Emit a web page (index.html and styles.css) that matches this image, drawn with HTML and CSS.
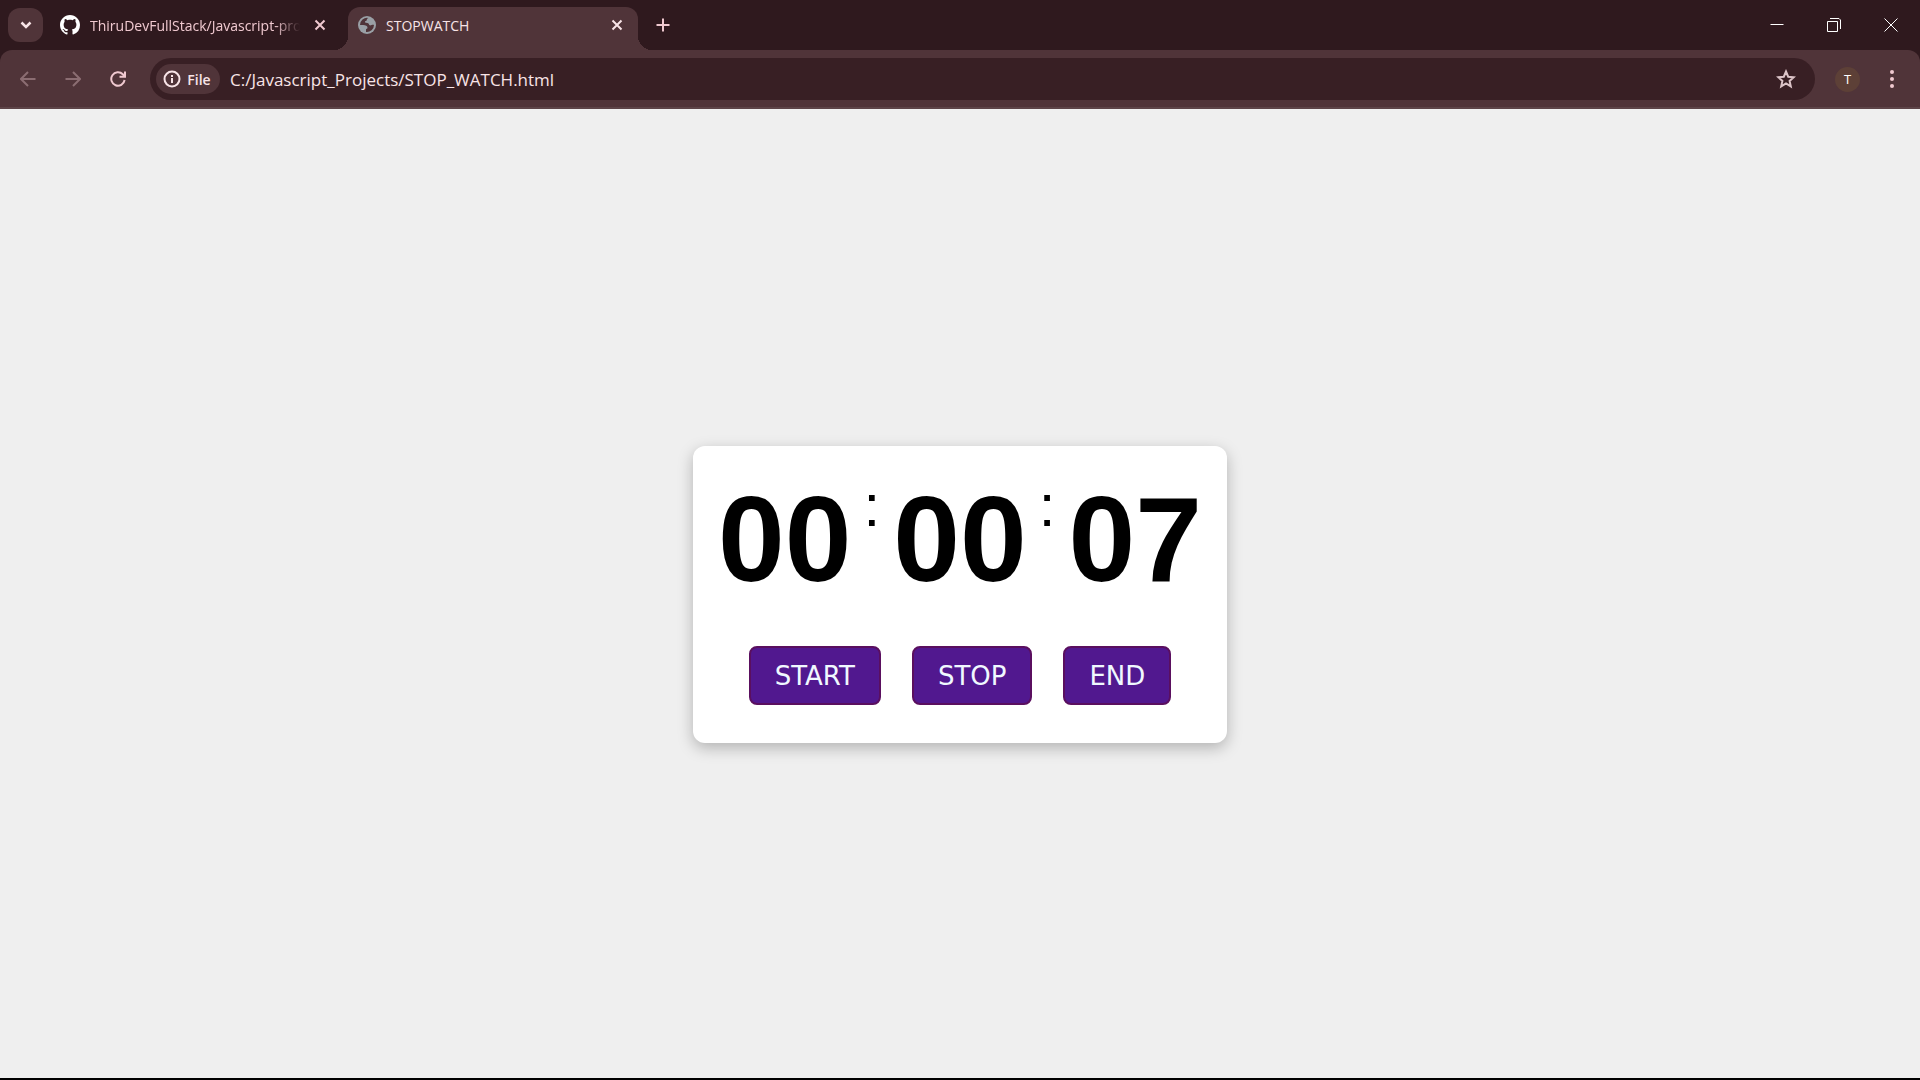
FILE: index.html
```html
<!DOCTYPE html>
<html lang="en">
<head>
<meta charset="utf-8">
<title>STOPWATCH</title>
<link rel="stylesheet" href="styles.css">
</head>
<body>
<header class="browser">
  <div class="tabstrip">
    <button class="tab-search" aria-label="Search tabs">
      <svg width="20" height="20" viewBox="0 0 20 20"><path d="M5.500 7.500 10 12l4.500-4.500" class="stroke thick"/></svg>
    </button>
    <div class="tab">
      <svg class="github" width="20" height="20" viewBox="0 0 16 16"><path d="M8 0C3.580 0 0 3.580 0 8c0 3.540 2.290 6.530 5.470 7.590.4.070.550-.170.550-.380 0-.190-.010-.820-.010-1.490-2.010.370-2.530-.490-2.690-.940-.090-.230-.480-.940-.820-1.130-.280-.150-.680-.520-.010-.530.630-.010 1.080.580 1.230.820.720 1.210 1.870.870 2.330.660.070-.520.280-.870.510-1.070-1.780-.2-3.640-.890-3.640-3.950 0-.870.310-1.590.820-2.150-.080-.2-.360-1.020.080-2.120 0 0 .670-.210 2.200.820.640-.180 1.320-.270 2-.270s1.360.090 2 .270c1.530-1.040 2.200-.820 2.200-.820.440 1.100.160 1.920.080 2.120.510.560.820 1.270.820 2.150 0 3.070-1.870 3.750-3.650 3.950.290.250.540.730.540 1.480 0 1.070-.010 1.930-.010 2.200 0 .210.150.460.550.380A8.010 8.010 0 0 0 16 8c0-4.420-3.580-8-8-8z"/></svg>
      <span class="tab-title fade">ThiruDevFullStack/Javascript-pro</span>
      <button class="tab-close" aria-label="Close tab"><svg width="12" height="12" viewBox="0 0 12 12"><path d="m1.500 1.500 9 9m0-9-9 9" class="stroke"/></svg></button>
    </div>
    <div class="tab active">
      <svg class="globe" width="18" height="18" viewBox="0 0 18 18"><circle cx="9" cy="9" r="9"/><path class="land" d="M10.500 1.900C9.600 2.300 8.700 3 8.700 4.200c0 1-1.800.6-1.800 1.700 0 1.200 2.700.6 3.600 1.500.7.800.3 1.500 1.300 1.900 1.200.4 2-.7 4.200-.4A7.100 7.100 0 0 1 8 15.900v-2.300c0-.9 1.500-.6 1.500-1.800 0-1.600-1.800-2.700-4.400-2.700H2A7.100 7.100 0 0 1 10.500 1.900z"/></svg>
      <span class="tab-title">STOPWATCH</span>
      <button class="tab-close" aria-label="Close tab"><svg width="12" height="12" viewBox="0 0 12 12"><path d="m1.500 1.500 9 9m0-9-9 9" class="stroke"/></svg></button>
    </div>
    <button class="new-tab" aria-label="New tab"><svg width="14" height="14" viewBox="0 0 14 14"><path d="M7 .5v13M.5 7h13" class="stroke"/></svg></button>
    <div class="window-controls">
      <button aria-label="Minimize"><svg width="14" height="14" viewBox="0 0 14 14"><path d="M.5 6.500h13" class="stroke thin"/></svg></button>
      <button aria-label="Restore"><svg width="14" height="14" viewBox="0 0 14 14"><path d="M.5 3.500h10v10H.5zM3 .5h9l1.500 1.500v9" class="stroke thin"/></svg></button>
      <button aria-label="Close"><svg width="14" height="14" viewBox="0 0 14 14"><path d="m.5.500 13 13m0-13-13 13" class="stroke thin"/></svg></button>
    </div>
  </div>
  <div class="toolbar">
    <button class="nav dim" aria-label="Back"><svg width="16" height="16" viewBox="0 0 16 16"><path d="M15.500 8H1.500M8 1 1 8l7 7" class="stroke"/></svg></button>
    <button class="nav dim" aria-label="Forward"><svg width="16" height="16" viewBox="0 0 16 16"><path d="M.5 8h14M8 1l7 7-7 7" class="stroke"/></svg></button>
    <button class="nav" aria-label="Reload"><svg width="16" height="16" viewBox="0 0 16 16"><path d="M14.600 9A6.700 6.700 0 1 1 12.800 3.300L15 5.600M15 .5v5.300H9.500" class="stroke"/></svg></button>
    <div class="omnibox">
      <button class="chip"><svg width="18" height="18" viewBox="0 0 18 18"><circle cx="9" cy="9" r="7.500" class="stroke"/><path d="M9 8v5M9 5v2" class="stroke"/></svg>File</button>
      <input class="address" aria-label="Address" value="C:/Javascript_Projects/STOP_WATCH.html">
      <button class="star" aria-label="Bookmark"><svg width="20" height="20" viewBox="0 0 20 20"><path d="m10 2.500 2.200 5.200 5.600.5-4.200 3.700 1.200 5.500-4.800-2.900-4.800 2.900 1.200-5.500-4.200-3.700 5.600-.5z" class="stroke"/></svg></button>
    </div>
    <button class="avatar" aria-label="Profile">T</button>
    <button class="menu" aria-label="Menu"><svg width="20" height="20" viewBox="0 0 20 20"><circle cx="10" cy="3" r="2"/><circle cx="10" cy="10" r="2"/><circle cx="10" cy="17" r="2"/></svg></button>
  </div>
</header>
<main class="page">
  <section class="card">
    <div class="time">
      <span class="digits">00</span><span class="colon">:</span><span class="digits">00</span><span class="colon">:</span><span class="digits">07</span>
    </div>
    <div class="actions">
      <button class="action">START</button>
      <button class="action">STOP</button>
      <button class="action">END</button>
    </div>
  </section>
</main>
</body>
</html>
```
FILE: styles.css
```css
* { box-sizing: border-box; }

body {
  margin: 0;
  min-height: 100vh;
  display: flex;
  flex-direction: column;
  font-family: "Open Sans", "Noto Sans", sans-serif;
  background: #efefef;
}

button {
  margin: 0;
  padding: 0;
  border: 0;
  background: none;
  color: inherit;
  font: inherit;
  display: flex;
  align-items: center;
  justify-content: center;
}

svg { flex: none; fill: currentColor; }
.stroke { fill: none; stroke: currentColor; stroke-width: 2; }
.thick { stroke-width: 2.500; }
.thin { stroke-width: 1; }

.browser { background: #2f191e; color: #f0c9d0; }

.tabstrip {
  display: flex;
  align-items: center;
  height: 50px;
  padding: 0 1px 0 8px;
}

.tab-search {
  width: 35px;
  height: 34px;
  border-radius: 12px;
  background: #503439;
  color: #f8e4e7;
}

.tab {
  display: flex;
  align-items: center;
  width: 305px;
  height: 43px;
  margin-top: 7px;
  padding: 0 22px 7px 17px;
  font-size: 14px;
}

.tab.active {
  position: relative;
  width: 290px;
  padding: 0 15px 7px 10px;
  border-radius: 12px 12px 0 0;
  background: #503439;
  color: #f8e4e7;
}

.tab.active::before,
.tab.active::after {
  content: "";
  position: absolute;
  bottom: 0;
  width: 14px;
  height: 14px;
}

.tab.active::before {
  right: 100%;
  background: radial-gradient(circle at 0 0, transparent 14px, #503439 14px);
}

.tab.active::after {
  left: 100%;
  background: radial-gradient(circle at 100% 0, transparent 14px, #503439 14px);
}

.github { color: #fff; }
.globe { color: #9aa0a6; }
.land { fill: #503439; }

.tab-title {
  flex: 1;
  min-width: 0;
  margin: 0 14px 0 10px;
  overflow: hidden;
  white-space: nowrap;
}

.fade { mask-image: linear-gradient(to right, #000 88%, transparent); }
.tab-close { width: 12px; height: 20px; }
.new-tab { width: 34px; height: 34px; margin-left: 8px; }

.window-controls {
  display: flex;
  margin-left: auto;
  color: #fff;
}

.window-controls button { width: 57px; height: 50px; }

.toolbar {
  display: flex;
  align-items: center;
  height: 59px;
  padding: 1px 17px 0 5px;
  border-bottom: 2px solid #5d4448;
  border-radius: 12px 12px 0 0;
  background: #503439;
}

.nav { width: 45px; height: 40px; }
.dim { color: #8b6d72; }

.omnibox {
  flex: 1;
  display: flex;
  align-items: center;
  height: 42px;
  margin-left: 10px;
  padding: 0 19px 0 6px;
  border-radius: 21px;
  background: #381f24;
  color: #f8e4e7;
}

.chip {
  gap: 6px;
  width: 64px;
  height: 30px;
  padding-right: 2px;
  border-radius: 15px;
  background: #503439;
  font-size: 14px;
  font-weight: 600;
}

.address {
  flex: 1;
  min-width: 0;
  padding: 1px 0 0 10px;
  border: 0;
  outline: 0;
  background: none;
  color: inherit;
  font: inherit;
  font-size: 17px;
}

.star { color: #dcc4c8; }

.avatar {
  width: 25px;
  height: 25px;
  margin-left: 20px;
  border-radius: 50%;
  background: #5d4037;
  color: #fff;
  font-size: 13px;
}

.menu { margin-left: 22px; width: 20px; margin-right: 1px; }

.page {
  flex: 1;
  display: grid;
  place-items: center;
  box-shadow: inset 0 -2px #000;
}

.card {
  padding: 26px 25px 38px;
  border-radius: 12px;
  background: #fff;
  box-shadow: 0 5px 15px rgba(0, 0, 0, 0.25);
}

.time {
  display: flex;
  align-items: flex-start;
  color: #000;
  font-family: "Liberation Sans", Arial, sans-serif;
}

.digits { font-size: 120px; font-weight: 700; line-height: 134px; }
.colon { padding: 0 13px 0 12px; font-size: 60px; line-height: 68px; }

.actions {
  display: flex;
  justify-content: center;
  gap: 31px;
  margin-top: 40px;
}

.action {
  padding: 13px 24px 11px;
  border: 2px solid #5a0f5f;
  border-radius: 8px;
  background: #51188f;
  color: #f0f8ff;
  font-family: "DejaVu Sans", Verdana, sans-serif;
  font-size: 26px;
  line-height: 31px;
}
```
